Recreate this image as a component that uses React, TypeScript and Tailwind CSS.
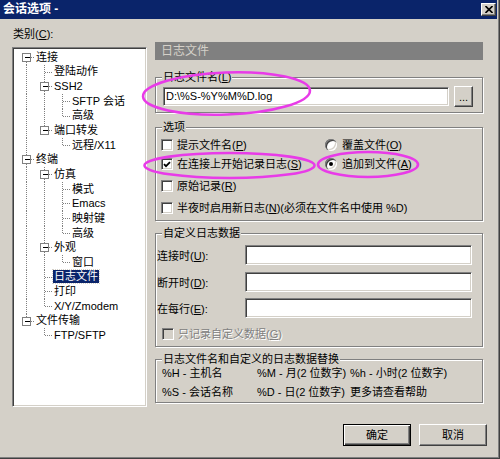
import React from 'react';

type TreeNode = { label: string; children?: TreeNode[]; selected?: boolean };

type FlatRow = {
  label: string;
  level: number;
  hasChildren: boolean;
  last: boolean;
  first: boolean;
  guides: boolean[];
  selected?: boolean;
};

const categories: TreeNode[] = [
  {
    label: '连接',
    children: [
      { label: '登陆动作' },
      { label: 'SSH2', children: [{ label: 'SFTP 会话' }, { label: '高级' }] },
      { label: '端口转发', children: [{ label: '远程/X11' }] },
    ],
  },
  {
    label: '终端',
    children: [
      { label: '仿真', children: [{ label: '模式' }, { label: 'Emacs' }, { label: '映射键' }, { label: '高级' }] },
      { label: '外观', children: [{ label: '窗口' }] },
      { label: '日志文件', selected: true },
      { label: '打印' },
      { label: 'X/Y/Zmodem' },
    ],
  },
  { label: '文件传输', children: [{ label: 'FTP/SFTP' }] },
];

const flatten = (nodes: TreeNode[], level: number, guides: boolean[], out: FlatRow[]) => {
  nodes.forEach((n, i) => {
    const last = i === nodes.length - 1;
    out.push({
      label: n.label,
      level,
      hasChildren: !!n.children?.length,
      last,
      first: level === 0 && i === 0,
      guides,
      selected: n.selected,
    });
    if (n.children) flatten(n.children, level + 1, [...guides, !last], out);
  });
  return out;
};

const rows = flatten(categories, 0, [], []);

const ROW_H = 14.65;
const COL = 18;

// dotted connector lines + expander box for one tree row
const TreeGuides = ({ row }: { row: FlatRow }) => {
  const w = (row.level + 1) * COL;
  const cy = 7.5;
  const cx = row.level * COL + 9.5;
  const dot = { stroke: '#808080', strokeWidth: 1, strokeDasharray: '1 1' };
  return (
    <svg width={w} height={ROW_H} className="shrink-0" shapeRendering="crispEdges">
      {row.guides.map((g, i) =>
        g ? <line key={i} x1={i * COL + 9.5} y1={0} x2={i * COL + 9.5} y2={ROW_H} {...dot} /> : null
      )}
      <line x1={cx} y1={row.first ? cy : 0} x2={cx} y2={row.last ? cy : ROW_H} {...dot} />
      <line x1={cx} y1={cy} x2={w} y2={cy} {...dot} />
      {row.hasChildren && (
        <g>
          <rect x={cx - 4} y={cy - 4} width={8} height={8} fill="#fff" stroke="#808080" />
          <line x1={cx - 2} y1={cy} x2={cx + 3} y2={cy} stroke="#000" />
        </g>
      )}
    </svg>
  );
};

const CheckBox = ({ checked, disabled }: { checked?: boolean; disabled?: boolean }) => (
  <span
    className={`w-[12px] h-[12px] shrink-0 flex items-center justify-center border border-t-[#808080] border-l-[#808080] border-r-white border-b-white shadow-[inset_1px_1px_0_#404040,inset_-1px_-1px_0_#d4d0c8] ${
      disabled ? 'bg-[#d4d0c8]' : 'bg-white'
    }`}
  >
    {checked && (
      <svg width="8" height="7" viewBox="0 0 8 7">
        <path d="M1 3.2 L3 5.2 L7 1.2" stroke="#000" strokeWidth="1.8" fill="none" />
      </svg>
    )}
  </span>
);

const Radio = ({ checked }: { checked?: boolean }) => (
  <span className="w-[12px] h-[12px] shrink-0 rounded-full bg-white flex items-center justify-center shadow-[inset_1px_1px_0_#808080,inset_2px_2px_0_#404040,inset_-1px_-1px_0_#fff,inset_-2px_-2px_0_#d4d0c8]">
    {checked && <span className="w-[4px] h-[4px] rounded-full bg-black" />}
  </span>
);

const Frame = ({ title, className, children }: { title: React.ReactNode; className: string; children: React.ReactNode }) => (
  <div className={`relative border border-[#808080] shadow-[inset_1px_1px_0_#fff,1px_1px_0_#fff] ${className}`}>
    <span className="absolute -top-[7px] left-[6px] bg-[#d4d0c8] px-[1px] leading-[13px]">{title}</span>
    {children}
  </div>
);

const sunken =
  'bg-white border border-t-[#808080] border-l-[#808080] border-r-white border-b-white shadow-[inset_1px_1px_0_#404040,inset_-1px_-1px_0_#d4d0c8]';

export default function App() {
  return (
    <div className="relative w-[500px] h-[459px] overflow-hidden bg-[#d4d0c8] text-[11px] leading-[13px] text-black font-['Liberation_Sans','Noto_Sans_CJK_SC',sans-serif] shadow-[inset_-1px_-1px_0_#404040,inset_-2px_-2px_0_#808080]">
      {/* title bar */}
      <div className="flex items-center h-[19px] mr-[3px] bg-[#0a246a] pl-[3px] pr-[1px]">
        <span className="text-white font-bold text-[12px]">会话选项 -</span>
        <div className="ml-auto w-[15px] h-[13px] flex items-center justify-center bg-[#d4d0c8] border border-t-white border-l-white border-r-[#404040] border-b-[#404040] shadow-[inset_-1px_-1px_0_#808080]">
          <svg width="8" height="7" viewBox="0 0 8 7">
            <path d="M0.5 0 L7.5 7 M7.5 0 L0.5 7" stroke="#000" strokeWidth="1.6" />
          </svg>
        </div>
      </div>

      <div className="flex flex-col pl-[12px]">
        <div className="flex items-start gap-[8px]">
          {/* category tree */}
          <div className="w-[135px] pt-[9px]">
            <div className="h-[13px] pl-[1px]">
              类别(<u>C</u>):
            </div>
            <div className={`mt-[6px] h-[360px] pt-[2px] pl-[4px] ${sunken}`}>
              {rows.map((row, i) => (
                <div key={i} className="flex items-center h-[14.65px]">
                  <TreeGuides row={row} />
                  <span
                    className={`ml-[0px] px-[1px] h-[13px] leading-[13px] whitespace-nowrap ${
                      row.selected ? 'bg-[#0a246a] text-white outline outline-1 outline-dotted outline-[#d4d0c8]' : ''
                    }`}
                  >
                    {row.label}
                  </span>
                </div>
              ))}
            </div>
          </div>

          {/* settings panel */}
          <div className="w-[328px] pt-[23px]">
            <div className="h-[18px] flex items-center pl-[6px] bg-[#808080] text-[#d4d0c8] text-[12px]">日志文件</div>

            <Frame title={<>日志文件名(<u>L</u>)</>} className="mt-[17px] pt-[8px] pb-[5px] pl-[7px] pr-[9px] flex items-center gap-[5px]">
              <div className={`flex-1 h-[19px] flex items-center pl-[2px] ${sunken}`}>{'D:\\%S-%Y%M%D.log'}</div>
              <div className="w-[19px] h-[21px] flex items-end justify-center pb-[5px] bg-[#d4d0c8] border border-t-white border-l-white border-r-[#404040] border-b-[#404040] shadow-[inset_-1px_-1px_0_#808080] leading-[8px]">
                ...
              </div>
            </Frame>

            <Frame title="选项" className="mt-[14px] pt-[8px] pb-[3px] pl-[5px] flex flex-col">
              <div className="flex items-center h-[18px]">
                <div className="w-[164px] flex items-center gap-[4px]">
                  <CheckBox />
                  <span>提示文件名(<u>P</u>)</span>
                </div>
                <div className="flex items-center gap-[5px]">
                  <Radio />
                  <span>覆盖文件(<u>O</u>)</span>
                </div>
              </div>
              <div className="flex items-center h-[18px] mt-[1px]">
                <div className="w-[164px] flex items-center gap-[4px]">
                  <CheckBox checked />
                  <span>在连接上开始记录日志(<u>S</u>)</span>
                </div>
                <div className="flex items-center gap-[5px]">
                  <Radio checked />
                  <span>追加到文件(<u>A</u>)</span>
                </div>
              </div>
              <div className="flex items-center gap-[4px] h-[18px] mt-[4px]">
                <CheckBox />
                <span>原始记录(<u>R</u>)</span>
              </div>
              <div className="flex items-center gap-[4px] h-[18px] mt-[4px]">
                <CheckBox />
                <span>半夜时启用新日志(<u>N</u>)(必须在文件名中使用 %D)</span>
              </div>
            </Frame>

            <Frame title="自定义日志数据" className="mt-[12px] pt-[11px] pb-[4px] pl-[1px] pr-[10px] flex flex-col">
              <div className="flex items-center h-[20px]">
                <span className="w-[88px] pt-[3px]">连接时(<u>U</u>):</span>
                <div className={`flex-1 h-[20px] ${sunken}`} />
              </div>
              <div className="flex items-center h-[20px] mt-[7px]">
                <span className="w-[88px] pt-[3px]">断开时(<u>D</u>):</span>
                <div className={`flex-1 h-[20px] ${sunken}`} />
              </div>
              <div className="flex items-center h-[20px] mt-[6px]">
                <span className="w-[88px] pt-[3px]">在每行(<u>E</u>):</span>
                <div className={`flex-1 h-[20px] ${sunken}`} />
              </div>
              <div className="flex items-center gap-[4px] h-[16px] mt-[8px] pl-[5px]">
                <CheckBox disabled />
                <span className="text-[#808080] [text-shadow:1px_1px_0_#fff]">
                  只记录自定义数据(<u>G</u>)
                </span>
              </div>
            </Frame>

            <Frame title="日志文件名和自定义的日志数据替换" className="mt-[12px] pt-[6px] pb-[2px] pl-[6px] grid grid-cols-[95px_93px_1fr] gap-y-[4px]">
              <span className="h-[15px] flex items-center">%H - 主机名</span>
              <span className="h-[15px] flex items-center">%M - 月(2 位数字)</span>
              <span className="h-[15px] flex items-center">%h - 小时(2 位数字)</span>
              <span className="h-[15px] flex items-center">%S - 会话名称</span>
              <span className="h-[15px] flex items-center">%D - 日(2 位数字)</span>
              <span className="h-[15px] flex items-center">更多请查看帮助</span>
            </Frame>
          </div>
        </div>

        {/* dialog buttons */}
        <div className="flex justify-end gap-[8px] mt-[17px] pr-[13px]">
          <div className="w-[68px] h-[22px] flex items-center justify-center border border-black shadow-[inset_1px_1px_0_#fff,inset_-1px_-1px_0_#404040,inset_-2px_-2px_0_#808080]">
            确定
          </div>
          <div className="w-[68px] h-[22px] flex items-center justify-center border border-t-white border-l-white border-r-[#404040] border-b-[#404040] shadow-[inset_-1px_-1px_0_#808080]">
            取消
          </div>
        </div>
      </div>

      {/* magenta annotation marks */}
      <svg className="absolute inset-0 pointer-events-none" width="500" height="459">
        <ellipse cx="226.5" cy="93.5" rx="83.5" ry="21" transform="rotate(-2 226.5 93.5)" stroke="#e83be8" strokeWidth="2.6" fill="none" />
        <ellipse cx="229.5" cy="165.5" rx="85" ry="12.5" stroke="#e83be8" strokeWidth="2.6" fill="none" />
        <ellipse cx="368" cy="164.5" rx="50" ry="12.5" stroke="#e83be8" strokeWidth="2.6" fill="none" />
      </svg>
    </div>
  );
}
